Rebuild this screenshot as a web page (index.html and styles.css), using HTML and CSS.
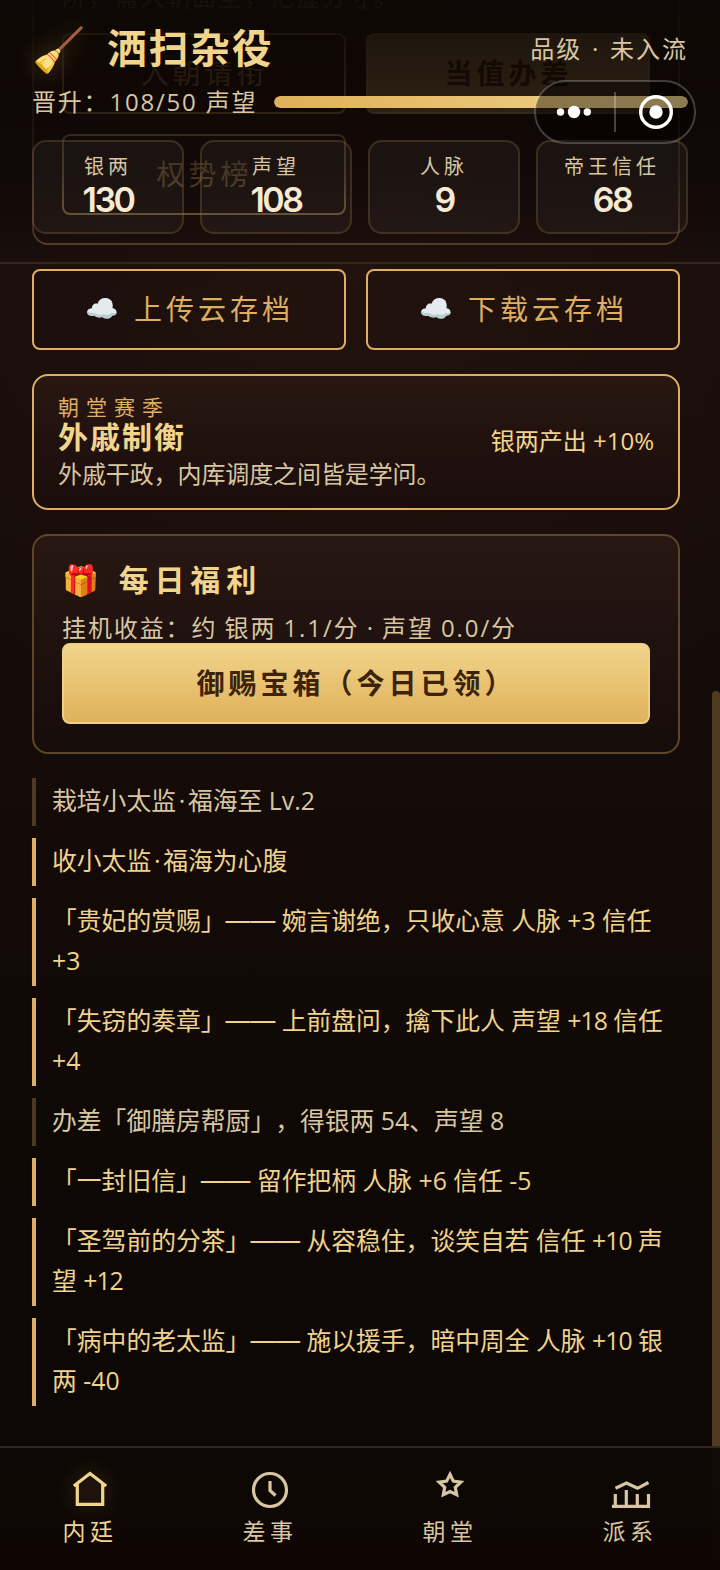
FILE: index.html
```html
<!DOCTYPE html>
<html lang="zh-CN">
<head>
<meta charset="utf-8">
<title>洒扫杂役</title>
<link rel="stylesheet" href="styles.css">
</head>
<body>
<div class="app">
  <main class="content">
    <section class="panel court">
      <p class="hint">阶，需入朝面圣，把握分寸。</p>
      <div class="grid">
        <button class="btn">入朝请衔</button>
        <button class="btn btn-gold">当值办差</button>
        <button class="btn">权势榜</button>
      </div>
    </section>

    <div class="grid">
      <button class="btn"><span class="emoji">☁️</span> 上传云存档</button>
      <button class="btn"><span class="emoji">☁️</span> 下载云存档</button>
    </div>

    <section class="season">
      <div>
        <div class="season-label">朝堂赛季</div>
        <div class="season-name">外戚制衡</div>
        <div class="season-desc">外戚干政，内库调度之间皆是学问。</div>
      </div>
      <div class="season-buff">银两产出 +10%</div>
    </section>

    <section class="panel daily">
      <h2 class="daily-title"><span class="emoji">🎁</span> 每日福利</h2>
      <p class="idle">挂机收益：约 银两 1.1/分 · 声望 0.0/分</p>
      <button class="btn btn-gold">御赐宝箱（今日已领）</button>
    </section>

    <ul class="log">
      <li>栽培小太监<i class="dot">·</i>福海至 Lv.2</li>
      <li class="hot">收小太监<i class="dot">·</i>福海为心腹</li>
      <li class="hot">「贵妃的赏赐」<span class="dash">——</span> 婉言谢绝，只收心意 人脉 +3 信任<br>+3</li>
      <li class="hot">「失窃的奏章」<span class="dash">——</span> 上前盘问，擒下此人 声望 <span class="num">+18</span> 信任<br>+4</li>
      <li>办差「御膳房帮厨」，得银两 54、声望 8</li>
      <li class="hot">「一封旧信」<span class="dash">——</span> 留作把柄 人脉 +6 信任 -5</li>
      <li class="hot">「圣驾前的分茶」<span class="dash">——</span> 从容稳住，谈笑自若 信任 <span class="num">+10</span> 声<br>望 <span class="num">+12</span></li>
      <li class="hot">「病中的老太监」<span class="dash">——</span> 施以援手，暗中周全 人脉 <span class="num">+10</span> 银<br>两 -40</li>
    </ul>
  </main>

  <div class="scrollbar"></div>

  <header class="header">
    <div class="title-row">
      <span class="rank-icon">🧹</span>
      <h1 class="rank">洒扫杂役</h1>
      <span class="grade">品级 · 未入流</span>
    </div>
    <div class="progress-row">
      <span class="progress-text">晋升：108/50 声望</span>
      <div class="bar"><div class="bar-fill" style="width:100%"></div></div>
    </div>
    <div class="stats">
      <div class="stat"><span class="stat-label">银两</span><b class="stat-value">130</b></div>
      <div class="stat"><span class="stat-label">声望</span><b class="stat-value">108</b></div>
      <div class="stat"><span class="stat-label">人脉</span><b class="stat-value">9</b></div>
      <div class="stat"><span class="stat-label">帝王信任</span><b class="stat-value">68</b></div>
    </div>
  </header>

  <div class="capsule">
    <svg width="162" height="64" viewBox="0 0 162 64">
      <rect x="1" y="1" width="160" height="62" rx="31" fill="#000" fill-opacity=".42" stroke="#fff" stroke-opacity=".22" stroke-width="2"/>
      <g fill="#fff"><circle cx="26.5" cy="32" r="3.7"/><circle cx="40" cy="32" r="6.2"/><circle cx="53.3" cy="32" r="3.7"/></g>
      <path d="M81 12v40" stroke="#fff" stroke-opacity=".25" stroke-width="2"/>
      <circle cx="122" cy="32" r="15.3" fill="none" stroke="#fff" stroke-width="3.4"/>
      <circle cx="122" cy="32" r="6.7" fill="#fff"/>
    </svg>
  </div>

  <nav class="nav">
    <a class="tab active">
      <svg width="40" height="40" viewBox="0 0 40 40"><path d="M3.8 18 20 5.500 36.200 18M7.300 16V36.300H32.700V16"/></svg>
      <span>内廷</span>
    </a>
    <a class="tab">
      <svg width="40" height="40" viewBox="0 0 40 40"><circle cx="20" cy="22" r="16.500"/><path d="M20 13v9.500l5.500 5"/></svg>
      <span>差事</span>
    </a>
    <a class="tab">
      <svg width="40" height="40" viewBox="0 0 40 40"><path d="M20 6.300 23.300 13.100 30.800 14.100 25.300 19.300 26.700 26.800 20 23.600 13.300 26.800 14.700 19.300 9.200 14.100 16.700 13.100Z"/></svg>
      <span>朝堂</span>
    </a>
    <a class="tab">
      <svg width="40" height="40" viewBox="0 0 40 40"><path d="M2 38.300H38.500V26M5.300 38V26M16.300 38V22M27.300 38V26M5.500 20.300 16.500 15 27.500 20.300 38.500 14.500"/></svg>
      <span>派系</span>
    </a>
  </nav>
</div>
</body>
</html>
```
FILE: styles.css
```css
* { box-sizing: border-box; margin: 0; padding: 0; }

body {
  width: 720px;
  height: 1570px;
  overflow: hidden;
  background: #0d0805;
  color: #d8c6a2;
  font-family: "Open Sans", "Noto Sans CJK SC", sans-serif;
  font-size: 24px;
  text-spacing-trim: space-all;
}

.app {
  position: relative;
  width: 720px;
  height: 1570px;
  overflow: hidden;
  background:
    radial-gradient(ellipse 520px 520px at 50% 270px, rgba(62, 28, 18, .3), transparent),
    linear-gradient(#100a08 0, #170e0b 300px, #150b09 750px, #0d0805 1250px);
}

/* scrolled page */
.content {
  display: flex;
  flex-direction: column;
  gap: 24px;
  width: 712px;
  padding: 0 32px;
  margin-top: -60px;
}

.panel {
  border: 2px solid #5e4629;
  border-radius: 16px;
  padding: 28px;
  background: linear-gradient(#281713, #160c0a);
}

.court { height: 305px; border-color: #6f5330; background: none; }
.hint { height: 38px; margin-bottom: 25px; padding-top: 9px; line-height: 36px; letter-spacing: 2px; white-space: nowrap; }

.grid { display: grid; grid-template-columns: 1fr 1fr; gap: 20px; }

.btn {
  height: 81px;
  padding: 0 0 3px 1px;
  border: 2px solid #dfae60;
  border-radius: 8px;
  background: none;
  color: #dfae60;
  font: inherit;
  font-size: 28px;
  letter-spacing: 4px;
  white-space: nowrap;
}

.btn-gold {
  border-color: #f0d088;
  background: linear-gradient(#f2d58c, #dfb059) border-box;
  color: #3d230b;
  font-weight: 700;
}

.emoji { font-family: "Noto Color Emoji", sans-serif; }
.btn .emoji { font-size: 27px; vertical-align: 2px; }

.season {
  display: flex;
  justify-content: space-between;
  align-items: center;
  height: 136px;
  padding: 3px 24px 0;
  border: 2px solid #dfae60;
  border-radius: 16px;
  background: linear-gradient(#28180f, #251410 25%, #1a0d0b);
}
.season-label { color: #dfae60; font-size: 21px; line-height: 26px; letter-spacing: 7px; }
.season-name { color: #f2d58c; font-size: 30px; font-weight: 700; line-height: 34px; letter-spacing: 2px; }
.season-desc { line-height: 40px; letter-spacing: -.1px; }
.season-buff { padding-bottom: 8px; color: #f2d58c; }

.daily { height: 220px; padding-top: 19px; }
.daily-title { color: #f2d58c; font-size: 30px; line-height: 50px; letter-spacing: 5.800px; white-space: nowrap; }
.idle { height: 37px; line-height: 44px; letter-spacing: 1.900px; word-spacing: -1px; white-space: nowrap; }
.daily .btn { display: block; width: 100%; }

.log { display: flex; flex-direction: column; gap: 12px; list-style: none; }
.log li {
  padding: 2px 0 6px 16px;
  border-left: 4px solid #4e3a20;
  font-size: 24.8px;
  line-height: 40px;
  white-space: nowrap;
}
.log .hot { border-color: #dfae60; color: #f0d28c; }
.dot { display: inline-block; width: 12px; text-align: center; font-style: normal; }
.dash { display: inline-block; width: 49.600px; font-family: Inter, sans-serif; line-height: 1; }
.num { letter-spacing: -1px; }

.scrollbar {
  position: absolute;
  top: 691px;
  right: 0;
  width: 8px;
  height: 879px;
  border-radius: 4px;
  background: #4f3c20;
}

/* pinned status header */
.header {
  position: absolute;
  inset: 0 0 auto 0;
  height: 264px;
  padding: 20px 32px 0;
  border-bottom: 2px solid #34251a;
  background: linear-gradient(rgba(13, 8, 5, .96), rgba(14, 6, 4, .89) 28%, rgba(15, 8, 6, .77) 66%, rgba(17, 9, 7, .58) 84%, rgba(20, 11, 8, .1));
}

.title-row { display: flex; align-items: center; height: 58px; }
.rank-icon { width: 75px; padding-top: 2px; font-family: "Noto Color Emoji", sans-serif; font-size: 43px; filter: drop-shadow(0 0 12px rgba(223, 174, 96, .4)); }
.rank { padding-bottom: 2px; color: #f2d58c; font-size: 39.500px; line-height: 52px; letter-spacing: 2.200px; }
.grade { margin-left: auto; padding-bottom: 3px; letter-spacing: 2px; word-spacing: 1.500px; }

.progress-row { display: flex; align-items: center; height: 48px; }
.progress-text { width: 242px; padding-bottom: 4px; letter-spacing: 1.800px; white-space: nowrap; }
.bar { flex: 1; height: 12px; border-radius: 6px; overflow: hidden; background: #2a1c10; }
.bar-fill { height: 100%; border-radius: 6px; background: linear-gradient(90deg, #dfb059, #f2d58c); }

.stats { display: grid; grid-template-columns: repeat(4, 1fr); gap: 16px; margin-top: 14px; }
.stat {
  display: flex;
  flex-direction: column;
  align-items: center;
  height: 94px;
  padding-top: 11px;
  border: 2px solid rgba(150, 115, 65, .27);
  border-radius: 14px;
  background: rgba(255, 255, 255, .045);
}
.stat-label { font-size: 20px; line-height: 27px; letter-spacing: 4px; }
.stat-value { color: #f6ead2; font-family: Inter, sans-serif; font-size: 34px; font-weight: 600; line-height: 40px; letter-spacing: -2.500px; }

.capsule { position: absolute; left: 534px; top: 80px; width: 162px; height: 64px; }
.capsule svg { display: block; }

.nav {
  position: absolute;
  inset: auto 0 0 0;
  display: grid;
  grid-template-columns: repeat(4, 1fr);
  height: 124px;
  border-top: 2px solid #34271a;
  background: linear-gradient(rgba(13, 8, 5, .93), #0f0604);
}
.tab { display: flex; flex-direction: column; align-items: center; padding-top: 20px; }
.tab svg { display: block; overflow: visible; fill: none; stroke: #d8c6a2; stroke-width: 3.200; }
.tab span { margin-top: 5px; font-size: 23px; line-height: 36px; letter-spacing: 4.500px; }
.active { color: #f2d58c; }
.active svg { stroke: #f2d58c; filter: drop-shadow(0 0 10px rgba(223, 174, 96, .4)); }
```
